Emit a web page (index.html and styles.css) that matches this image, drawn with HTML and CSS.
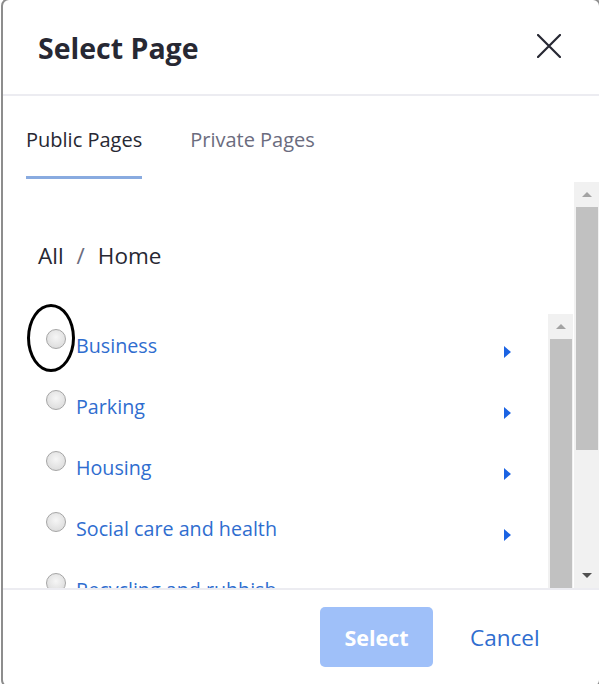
FILE: index.html
```html
<!DOCTYPE html>
<html lang="en">
<head>
  <meta charset="UTF-8" />
  <title>Select Page</title>
  <link rel="stylesheet" href="styles.css">
</head>
<body>

  <div class="modal">
    <header class="modal-header">
      <h2>Select Page</h2>
      <button class="close" aria-label="Close">
        <svg width="24" height="24" viewBox="0 0 24 24">
          <path d="M1 1 L23 23 M23 1 L1 23" stroke="#272833" stroke-width="2.2" stroke-linecap="round" fill="none" />
        </svg>
      </button>
    </header>

    <nav class="tabs">
      <span class="tab active">Public Pages</span>
      <span class="tab">Private Pages</span>
    </nav>

    <div class="scroll-area">
      <div class="scroll-content">
        <div class="breadcrumb">
          <span>All</span>
          <span class="sep">/</span>
          <span>Home</span>
        </div>

        <div class="tree">
          <ul class="tree-list">
            <li class="tree-row">
              <span class="radio"></span>
              <a class="label">Business</a>
              <span class="caret"></span>
            </li>
            <li class="tree-row">
              <span class="radio"></span>
              <a class="label">Parking</a>
              <span class="caret"></span>
            </li>
            <li class="tree-row">
              <span class="radio"></span>
              <a class="label">Housing</a>
              <span class="caret"></span>
            </li>
            <li class="tree-row">
              <span class="radio"></span>
              <a class="label">Social care and health</a>
              <span class="caret"></span>
            </li>
            <li class="tree-row">
              <span class="radio"></span>
              <a class="label">Recycling and rubbish</a>
              <span class="caret"></span>
            </li>
          </ul>
          <div class="scrollbar inner">
            <span class="sb-btn"><i class="arrow-up"></i></span>
            <span class="sb-thumb"></span>
          </div>
          <!-- marca desenhada a mão em volta do primeiro radio -->
          <span class="mark"></span>
        </div>
      </div>

      <div class="scrollbar outer">
        <span class="sb-btn"><i class="arrow-up"></i></span>
        <span class="sb-thumb"></span>
        <span class="sb-track"></span>
        <span class="sb-btn"><i class="arrow-down"></i></span>
      </div>
    </div>

    <footer class="modal-footer">
      <button class="btn-primary" disabled>Select</button>
      <button class="btn-link">Cancel</button>
    </footer>
  </div>

</body>
</html>
```

FILE: styles.css
```css
html, body {
  margin: 0;
  height: 100%;
  overflow: hidden;
  background: #ffffff;
}
body {
  font-family: "Open Sans", "Noto Sans", Arial, sans-serif;
  color: #272833;
}
.modal {
  box-sizing: border-box;
  width: 600px;
  height: 690px;
  margin: -2px 0 0 1px;
  border: 2px solid #8d8d8d;
  border-radius: 8px;
  background: #fff;
  display: flex;
  flex-direction: column;
  overflow: hidden;
}
.modal-header {
  flex: none;
  display: flex;
  align-items: center;
  justify-content: space-between;
  padding: 0 38px 0 35px;
  border-bottom: 2px solid #ececf1;
  box-sizing: border-box;
  height: 96px;
}
.modal-header h2 {
  margin: 1px 0 0 0;
  font-size: 28.5px;
  font-weight: 700;
}
.close {
  border: none;
  background: none;
  padding: 0;
  margin-bottom: 2px;
  display: flex;
}
.tabs {
  flex: none;
  height: 86px;
  display: flex;
  gap: 48px;
  padding-left: 23px;
  box-sizing: border-box;
}
.tab {
  font-size: 20px;
  color: #6b6c7e;
  padding-top: 31px;
  line-height: 26px;
  border-bottom: 3px solid transparent;
  height: 83px;
  box-sizing: border-box;
}
.tab.active {
  color: #272833;
  border-bottom-color: #89abe0;
}
.scroll-area {
  flex: none;
  height: 406px;
  display: flex;
  overflow: hidden;
}
.scroll-content {
  flex: 1;
  padding-top: 59px;
}
.breadcrumb {
  padding-left: 35px;
  font-size: 22.5px;
  line-height: 30px;
  display: flex;
  gap: 13px;
}
.breadcrumb .sep {
  color: #6b6c7e;
}
.tree {
  margin-top: 43px;
  height: 280px;
  display: flex;
  position: relative;
}
.tree-list {
  flex: 1;
  list-style: none;
  margin: 0;
  padding: 2px 37px 0 43px;
}
.tree-row {
  display: flex;
  align-items: flex-start;
  height: 61px;
}
.radio {
  width: 18px;
  height: 18px;
  margin-top: 13px;
  border: 1px solid #a5a5a5;
  border-radius: 50%;
  background: radial-gradient(circle at 50% 40%, #f6f6f6, #d6d6d6);
  flex: none;
}
.label {
  margin: 18px 0 0 10px;
  font-size: 19.7px;
  line-height: 24px;
  color: #2f6dcf;
}
.caret {
  margin: 30px 0 0 auto;
  width: 0;
  height: 0;
  border-top: 6px solid transparent;
  border-bottom: 6px solid transparent;
  border-left: 7px solid #1b63e3;
}
.scrollbar {
  flex: none;
  display: flex;
  flex-direction: column;
  background: #f1f1f1;
}
.scrollbar.inner {
  width: 25px;
  margin-right: 1px;
}
.scrollbar.outer {
  width: 25px;
}
.sb-btn {
  height: 25px;
  display: flex;
  align-items: center;
  justify-content: center;
  flex: none;
}
.sb-thumb {
  background: #c1c1c1;
  margin: 0 1px 0 2px;
}
.inner .sb-thumb {
  flex: 1;
}
.outer .sb-thumb {
  height: 243px;
}
.sb-track {
  flex: 1;
}
.arrow-up {
  width: 0;
  height: 0;
  border-left: 5px solid transparent;
  border-right: 5px solid transparent;
  border-bottom: 5px solid #a3a3a3;
}
.arrow-down {
  width: 0;
  height: 0;
  border-left: 5px solid transparent;
  border-right: 5px solid transparent;
  border-top: 5px solid #505050;
}
.mark {
  position: absolute;
  left: 24px;
  top: -10px;
  width: 42px;
  height: 62px;
  border: 3px solid #000;
  border-radius: 50%;
}
.modal-footer {
  flex: 1;
  border-top: 2px solid #ececf1;
  display: flex;
  align-items: flex-start;
  padding: 17px 0 0 317px;
  gap: 13px;
}
.btn-primary {
  width: 113px;
  height: 60px;
  border: none;
  border-radius: 5px;
  background: #9fc0f9;
  color: #fff;
  font-family: inherit;
  font-size: 21.5px;
  font-weight: 700;
}
.btn-link {
  height: 60px;
  border: none;
  background: none;
  padding: 0 24px;
  color: #2f6dcf;
  font-family: inherit;
  font-size: 22.5px;
}
```
